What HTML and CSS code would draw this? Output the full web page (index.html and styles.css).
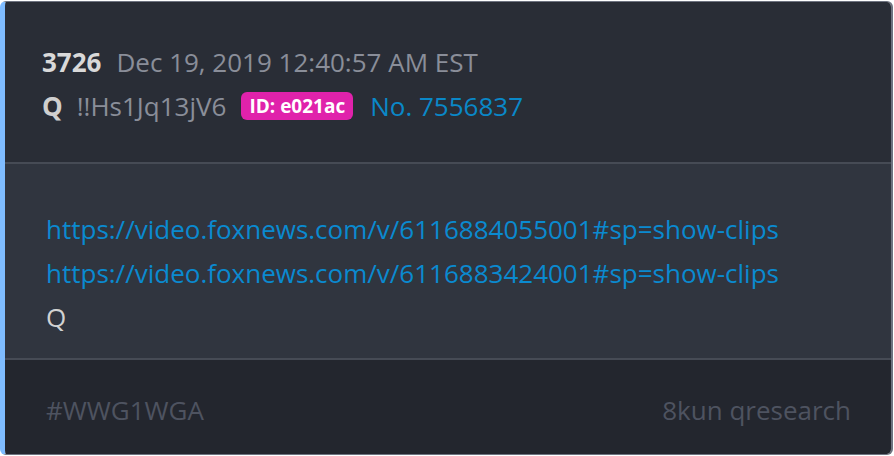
FILE: index.html
```html
<!DOCTYPE html>
<html>
<head>
<meta charset="utf-8">
<link rel="stylesheet" href="styles.css">
</head>
<body>
<div class="card">
  <div class="head">
    <div class="row"><span class="num">3726</span><span class="date">Dec 19, 2019 12:40:57 AM EST</span></div>
    <div class="row"><span class="name">Q</span><span class="trip">!!Hs1Jq13jV6</span><span class="badge">ID: e021ac</span><a class="no">No. 7556837</a></div>
  </div>
  <div class="body">
    <a class="link">https://video.foxnews.com/v/6116884055001#sp=show-clips</a>
    <a class="link">https://video.foxnews.com/v/6116883424001#sp=show-clips</a>
    <div class="sig">Q</div>
  </div>
  <div class="foot">
    <span>#WWG1WGA</span>
    <span>8kun qresearch</span>
  </div>
</div>
</body>
</html>
```
FILE: styles.css
```css
html, body { margin: 0; background: #ffffff; }
body { padding-top: 1px; font-family: "Open Sans", "Noto Sans", sans-serif; font-size: 26px; }
.card {
  width: 893px;
  box-sizing: border-box;
  border: 1px solid #6e7380;
  border-left: 5px solid #7fbcff;
  border-radius: 6px;
  border-right-width: 2px;
  overflow: hidden;
  height: 454px;
  display: flex;
  flex-direction: column;
}
.head { background: #292d36; padding: 38px 37px 34px; border-bottom: 2px solid #464b55; }
.row { display: flex; align-items: center; height: 44px; }
.num { font-weight: 700; color: #d9d9d9; margin-right: 15px; }
.date { color: #8a8e99; }
.name { font-weight: 700; color: #cfcfcf; margin-right: 14px; }
.trip { color: #8a8e99; margin-right: 15px; }
.badge { background: #e022ab; color: #fff; font-weight: 700; font-size: 19px; border-radius: 6px; padding: 0 8px; height: 28px; line-height: 28px; margin-right: 17px; }
.no { color: #0a88c8; }
.body { background: #30353f; padding: 43px 41px 19px; border-bottom: 2px solid #464b55; }
.link { display: block; color: #0a8ad0; line-height: 44px; }
.sig { color: #d2d2d2; line-height: 44px; }
.foot { flex: 1; background: #23262e; padding: 28px 40px 0 41px; display: flex; justify-content: space-between; color: #4e5360; line-height: 44px; }
```
